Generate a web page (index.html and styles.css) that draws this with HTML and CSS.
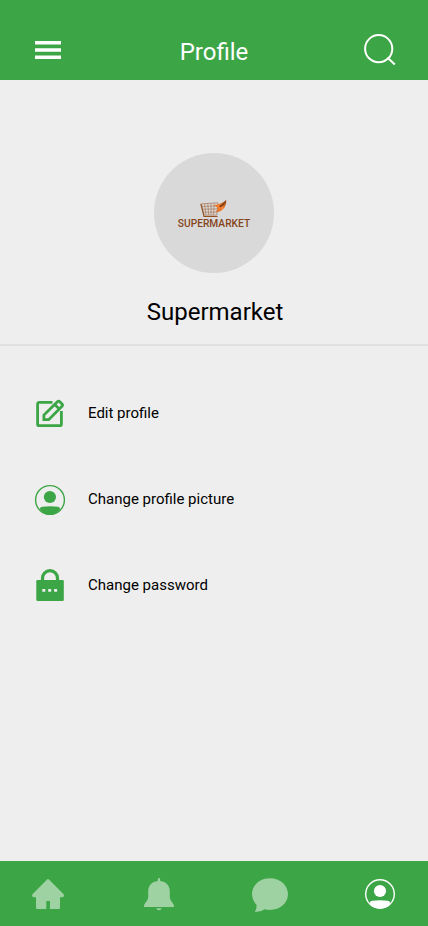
FILE: index.html
```
<!DOCTYPE html>
<html lang="en">
<head>
<meta charset="utf-8">
<meta name="viewport" content="width=device-width, initial-scale=1">
<title>Profile</title>
<link rel="stylesheet" href="styles.css">
</head>
<body>
<div class="app">
  <header class="header">
    <svg class="icon menu-icon" viewBox="0 0 26 18"><path d="M0 0h26v3.6H0zM0 7.2h26v3.6H0zM0 14.4h26V18H0z"/></svg>
    <h1 class="title">Profile</h1>
    <svg class="icon search-icon" viewBox="0 0 32 32"><circle cx="14.7" cy="14.7" r="13.6"/><path d="M23.4 23.4l7.4 7"/></svg>
  </header>
  <main class="content">
    <section class="profile">
      <div class="avatar">
        <svg class="logo" viewBox="0 0 74 34">
          <defs><linearGradient id="flame" x1="0" y1="1" x2="1" y2="0"><stop offset="0" stop-color="#c9651f"/><stop offset=".5" stop-color="#fa8334"/><stop offset="1" stop-color="#8a3d10"/></linearGradient></defs>
          <path class="mesh" d="M24.500 6.800l16.500-1-1.200 12.300H27zM25.200 9.500l15.300-.7M25.800 12.300l14.400-.4M26.400 15.200l13.500-.1M27.600 6.700l1.400 11.400M30.800 6.500l.9 11.600M34 6.300l.1 11.800M37.200 6.100l-.6 12"/>
          <path class="frame" d="M23.800 6.800l3.200 12.700h13.600"/>
          <path class="flame" d="M36.500 8.200C41.500 7.600 46 6.200 49.200 3c.4 5.600-2.600 11.200-8.700 11.900l-2-.4c2.800-1.600 3-4.400-2-6.300z"/>
          <path class="flame-core" d="M42.300 8.800c2.700-.9 4.900-2.500 6.300-4.700-.6 3-2.800 5.300-5.600 6.300z"/>
          <text class="wordmark" x="0.8" y="29.600" textLength="72.300" lengthAdjust="spacingAndGlyphs">SUPERMARKET</text>
        </svg>
      </div>
      <h2 class="name">Supermarket</h2>
    </section>
    <nav class="options">
      <a class="option">
        <svg class="icon option-icon line" viewBox="0 0 32 34"><path d="M18.500 5.300H5.400Q3.600 5.300 3.600 7.100v19.800Q3.600 28.700 5.400 28.700h20.200Q27.400 28.700 27.400 26.900V14"/><path d="M9.900 18v4.700h4.800L28 9.300q1.200-1.200 0-2.400l-2.200-2.200q-1.200-1.200-2.400 0zM20.700 7.400l4.600 4.600"/></svg>
        <span>Edit profile</span>
      </a>
      <a class="option">
        <svg class="icon option-icon" viewBox="0 0 32 34"><circle class="ring" cx="16" cy="17" r="14.4"/><circle cx="15.900" cy="14" r="6.100"/><path d="M5.700 26q.3-2 2.500-2.300 7.800-.9 15.600 0 2.200.3 2.500 2.300-4.100 5.500-10.300 5.500T5.700 26z"/></svg>
        <span>Change profile picture</span>
      </a>
      <a class="option">
        <svg class="icon option-icon" viewBox="0 0 32 34"><path class="shackle" d="M8.500 12V9.200a7.500 7.500 0 0 1 15 0V12"/><rect x="2.300" y="11" width="27.500" height="21" rx="1.200"/><path class="dots" d="M8.300 20h3v2.800h-3zM14.200 20h3v2.800h-3zM20.100 20h3v2.800h-3z"/></svg>
        <span>Change password</span>
      </a>
    </nav>
  </main>
  <footer class="tabs">
    <svg class="icon tab" viewBox="0 0 38 38"><path d="M17.800 3.700Q19 2.500 20.200 3.700L34.400 18q.9.900.5 2-.4 1.200-1.700 1.200H31V32q0 1-1 1h-9.100v-8h-3.600v8H8q-1 0-1-1V21.200H5q-1.300 0-1.800-1.200-.4-1.100.5-2z"/></svg>
    <svg class="icon tab" viewBox="0 0 38 38"><path d="M17.800 5V3.400q0-1.300 1.200-1.300t1.200 1.300V5c6 .6 9.600 4.800 9.600 10.400v5.200c0 5.300 4.200 5.600 4.200 10.400H4c0-4.800 4.200-5.100 4.200-10.400v-5.200C8.200 9.800 11.800 5.600 17.800 5zM16.200 32.200h5.600q-.8 2-2.800 2t-2.800-2z"/></svg>
    <svg class="icon tab chat" viewBox="0 0 38 38"><path d="M19 2.200c10.200 0 18 7 18 15.900S29.200 34 19 34q-2.800 0-5.400-.8Q9.500 36.300 3.800 36.100 5.900 33.200 5.500 28.800C2.700 26 1 22.300 1 18.100 1 9.200 8.800 2.200 19 2.200z"/></svg>
    <svg class="icon tab active" viewBox="0 0 38 38"><circle class="ring" cx="19" cy="18" r="14.300"/><circle cx="19" cy="15" r="6.100"/><path d="M8.700 27q.3-2 2.500-2.300 7.800-.9 15.600 0 2.200.3 2.500 2.300-4.100 5.500-10.300 5.500T8.700 27z"/></svg>
  </footer>
</div>
</body>
</html>
```
FILE: styles.css
```
* { box-sizing: border-box; }

body {
  margin: 0;
  background: #eee;
  color: #000;
  font-family: Roboto, "Liberation Sans", sans-serif;
}

.app {
  display: flex;
  flex-direction: column;
  height: 926px;
  width: 428px;
}

.icon, .logo { display: block; flex: none; }

.header {
  display: grid;
  grid-template-columns: 32px 1fr 32px;
  align-items: center;
  height: 80px;
  padding: 20px 32px 0 35px;
  background: #3ca546;
  color: #fff;
}

.title {
  margin: 3px 3px 0 0;
  text-align: center;
  font-size: 24px;
  font-weight: 400;
  line-height: 28px;
}

.menu-icon { width: 26px; height: 18px; fill: #fff; }

.search-icon {
  width: 32px;
  height: 32px;
  fill: none;
  stroke: #fff;
  stroke-width: 2;
}

.content { flex: 1; }

.profile {
  display: flex;
  flex-direction: column;
  align-items: center;
  height: 266px;
  padding-top: 73px;
  border-bottom: 2px solid #e1e1e1;
}

.avatar {
  display: flex;
  justify-content: center;
  width: 120px;
  height: 120px;
  padding-top: 44px;
  border-radius: 50%;
  background: #d9d9d9;
}

.logo { width: 74px; height: 34px; overflow: visible; }
.flame { fill: url(#flame); }
.flame-core { fill: #733712; }
.mesh { fill: none; stroke: #ac8065; stroke-width: .8; }
.frame { fill: none; stroke: #925022; stroke-width: 1.1; }
.wordmark {
  fill: #85451b;
  font: 500 11.5px Roboto, "Liberation Sans", sans-serif;
}

.name {
  margin: 25px 0 0 2px;
  font-size: 24px;
  font-weight: 400;
  line-height: 28px;
}

.options {
  display: flex;
  flex-direction: column;
  gap: 52px;
  padding: 51px 34px;
}

.option {
  display: flex;
  align-items: center;
  gap: 22px;
  height: 34px;
  font-size: 15px;
  line-height: 18px;
}

.option span { margin-top: -2px; }
.option-icon { width: 32px; height: 34px; fill: #3ca546; stroke: none; }
.line { fill: none; stroke: #3ca546; stroke-width: 2.8; }
.ring { fill: none; stroke: #3ca546; stroke-width: 1.4; }
.shackle { fill: none; stroke: #3ca546; stroke-width: 3.2; }
.dots { fill: #eee; }

.tabs {
  display: flex;
  justify-content: space-between;
  height: 65px;
  padding: 15px 29px 0;
  background: #3ca546;
}

.tab { width: 38px; height: 38px; fill: #9ed2a3; }
.chat { margin: 0 -1px 0 1px; }
.active { fill: #fff; }
.active .ring { stroke: #fff; }
```
